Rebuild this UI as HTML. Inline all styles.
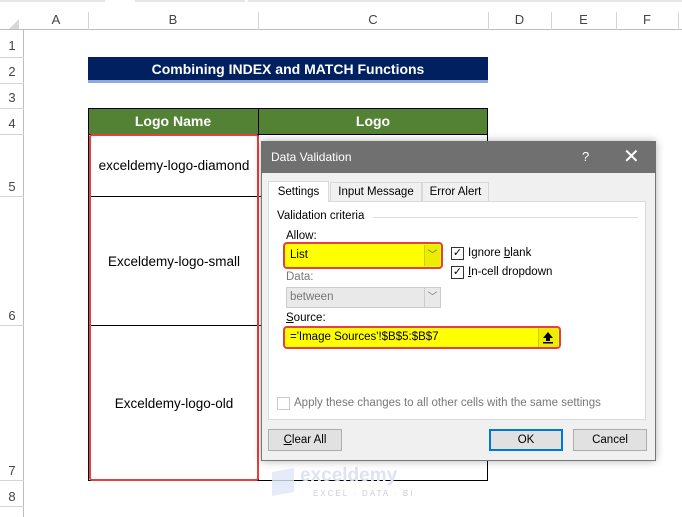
<!DOCTYPE html>
<html><head><style>
*{margin:0;padding:0;box-sizing:border-box}
body{width:682px;height:517px;background:#fff;position:relative;overflow:hidden;font-family:"Liberation Sans",sans-serif}
.a{position:absolute}
.hd{font-size:13px;color:#444;text-align:center}
.vl{position:absolute;width:1px;background:#d4d4d4}
.hl{position:absolute;height:1px;background:#d4d4d4}
.t{font-size:11.5px;color:#000}
</style></head><body>
<div class="a" style="left:0;top:0;width:682px;height:2px;background:#e6e6e6"></div>
<div class="a" style="left:105px;top:0;width:30px;height:2px;background:#fff"></div>
<div class="a" style="left:245px;top:0;width:3px;height:2px;background:#fff"></div>
<div class="a" style="left:0;top:12px;width:682px;height:18px;background:#fff;border-bottom:1px solid #bdbdbd"></div>
<div class="a" style="left:0;top:30px;width:24px;height:487px;border-right:1px solid #bdbdbd"></div>
<div class="a" style="left:9px;top:19px;width:0;height:0;border-left:10px solid transparent;border-bottom:10px solid #d8d8d8"></div>
<div class="a hd" style="left:24px;top:12px;width:64px">A</div>
<div class="a hd" style="left:88px;top:12px;width:170px">B</div>
<div class="a hd" style="left:258px;top:12px;width:230px">C</div>
<div class="a hd" style="left:488px;top:12px;width:63px">D</div>
<div class="a hd" style="left:551px;top:12px;width:65px">E</div>
<div class="a hd" style="left:616px;top:12px;width:62px">F</div>
<div class="vl" style="left:88px;top:12px;height:18px"></div>
<div class="vl" style="left:258px;top:12px;height:18px"></div>
<div class="vl" style="left:488px;top:12px;height:18px"></div>
<div class="vl" style="left:551px;top:12px;height:18px"></div>
<div class="vl" style="left:616px;top:12px;height:18px"></div>
<div class="vl" style="left:678px;top:12px;height:18px"></div>
<div class="a hd" style="left:0;top:38px;width:24px">1</div>
<div class="a hd" style="left:0;top:64px;width:24px">2</div>
<div class="a hd" style="left:0;top:90px;width:24px">3</div>
<div class="a hd" style="left:0;top:116px;width:24px">4</div>
<div class="a hd" style="left:0;top:179px;width:24px">5</div>
<div class="a hd" style="left:0;top:308px;width:24px">6</div>
<div class="a hd" style="left:0;top:463px;width:24px">7</div>
<div class="a hd" style="left:0;top:489px;width:24px">8</div>
<div class="hl" style="left:0;top:57px;width:24px"></div>
<div class="hl" style="left:0;top:83px;width:24px"></div>
<div class="hl" style="left:0;top:108px;width:24px"></div>
<div class="hl" style="left:0;top:134px;width:24px"></div>
<div class="hl" style="left:0;top:196px;width:24px"></div>
<div class="hl" style="left:0;top:325px;width:24px"></div>
<div class="hl" style="left:0;top:480px;width:24px"></div>
<div class="hl" style="left:0;top:506px;width:24px"></div>
<div class="a" style="left:88px;top:57px;width:400px;height:26px;background:#002060;border-bottom:3px solid #8ea9db;color:#fff;font-weight:bold;font-size:14px;text-align:center;line-height:24px">Combining INDEX and MATCH Functions</div>
<div class="a" style="left:88px;top:108px;width:400px;height:27px;background:#548235;border:1px solid #000"></div>
<div class="a" style="left:258px;top:108px;width:1px;height:27px;background:#000"></div>
<div class="a" style="left:88px;top:113px;width:170px;color:#fff;font-weight:bold;font-size:14px;text-align:center">Logo Name</div>
<div class="a" style="left:258px;top:113px;width:230px;color:#fff;font-weight:bold;font-size:14px;text-align:center">Logo</div>
<div class="a" style="left:88px;top:134px;width:400px;height:347px;border:1px solid #000;border-top:none"></div>
<div class="a" style="left:258px;top:134px;width:1px;height:347px;background:#000"></div>
<div class="a" style="left:88px;top:196px;width:400px;height:1px;background:#000"></div>
<div class="a" style="left:88px;top:325px;width:400px;height:1px;background:#000"></div>
<div class="a" style="left:89px;top:134px;width:170px;height:347px;border:2px solid #e84040;border-radius:3px"></div>
<div class="a" style="left:88px;top:158px;width:172px;text-align:center;font-size:13.5px">exceldemy-logo-diamond</div>
<div class="a" style="left:88px;top:254px;width:172px;text-align:center;font-size:13.5px">Exceldemy-logo-small</div>
<div class="a" style="left:88px;top:396px;width:172px;text-align:center;font-size:13.5px">Exceldemy-logo-old</div>
<div class="a" style="left:272px;top:470px;width:22px;height:24px;background:#dfe6f7;transform:skewY(-10deg);opacity:.8"></div>
<div class="a" style="left:300px;top:465px;font-size:19px;font-weight:bold;color:#dde3f3">exceldemy</div>
<div class="a" style="left:313px;top:489px;font-size:8px;color:#ccd;letter-spacing:2px">EXCEL · DATA · BI</div>
<div class="a" style="left:261px;top:141px;width:395px;height:320px;background:#f0f0f0;border:1px solid #777;box-shadow:0 0 8px rgba(0,0,0,.3)"></div>
<div class="a" style="left:261px;top:141px;width:395px;height:32px;background:#707070;color:#fff;font-size:12px;line-height:32px;padding-left:10px">Data Validation</div>
<div class="a" style="left:582px;top:149px;color:#fff;font-size:13px">?</div>
<div class="a" style="left:623px;top:144px;color:#fff;font-size:20px">✕</div>
<div class="a" style="left:268px;top:201px;width:378px;height:219px;background:#fff;border:1px solid #d9d9d9"></div>
<div class="a t" style="left:268px;top:181px;width:61px;height:21px;background:#fff;border:1px solid #d9d9d9;border-bottom:none;text-align:center;line-height:20px">Settings</div>
<div class="a t" style="left:330px;top:182px;width:92px;height:19px;border:1px solid #d9d9d9;border-bottom:none;text-align:center;line-height:19px">Input Message</div>
<div class="a t" style="left:422px;top:182px;width:67px;height:19px;border:1px solid #d9d9d9;border-bottom:none;text-align:center;line-height:19px">Error Alert</div>
<div class="a t" style="left:277px;top:210px">Validation criteria</div>
<div class="a" style="left:373px;top:217px;width:265px;height:1px;background:#ddd"></div>
<div class="a t" style="left:286px;top:230px">Allow:</div>
<div class="a" style="left:283px;top:242px;width:160px;height:27px;border:2px solid #e84040;border-radius:4px;background:#ffff00"></div>
<div class="a t" style="left:290px;top:249px">List</div>
<div class="a" style="left:424px;top:245px;width:16px;height:21px;border-left:1px solid #cc0;background:#eded00;color:#666;font-size:10px;text-align:center;line-height:21px">﹀</div>
<div class="a t" style="left:286px;top:271px;color:#777">Data:</div>
<div class="a" style="left:286px;top:287px;width:155px;height:21px;border:1px solid #ccc;background:#e9e9e9"></div>
<div class="a t" style="left:290px;top:291px;color:#777">between</div>
<div class="a" style="left:424px;top:288px;width:16px;height:19px;border-left:1px solid #ccc;color:#777;font-size:10px;text-align:center;line-height:19px">﹀</div>
<div class="a" style="left:451px;top:247px;width:13px;height:13px;border:1px solid #333;background:#fff;font-size:11px;line-height:11px;text-align:center">✓</div>
<div class="a t" style="left:468px;top:247px">Ignore <u>b</u>lank</div>
<div class="a" style="left:451px;top:266px;width:13px;height:13px;border:1px solid #333;background:#fff;font-size:11px;line-height:11px;text-align:center">✓</div>
<div class="a t" style="left:468px;top:266px"><u>I</u>n-cell dropdown</div>
<div class="a t" style="left:286px;top:312px"><u>S</u>ource:</div>
<div class="a" style="left:283px;top:326px;width:278px;height:23px;border:2px solid #e84040;border-radius:4px;background:#ffff00"></div>
<div class="a" style="left:290px;top:331px;font-size:11.5px">='Image Sources'!$B$5:$B$7</div>
<div class="a" style="left:538px;top:328px;width:20px;height:19px;border-left:1px solid #cc0;background:#eded00"></div>
<svg class="a" style="left:542px;top:331px" width="12" height="13" viewBox="0 0 12 13"><path d="M6 1 L11 7 H8 V10 H4 V7 H1 Z" fill="#000"/><rect x="1" y="11" width="10" height="1.5" fill="#000"/></svg>
<div class="a" style="left:277px;top:397px;width:13px;height:13px;border:1px solid #ccc;background:#fff"></div>
<div class="a t" style="left:294px;top:397px;color:#777">Apply these changes to all other cells with the same settings</div>
<div class="a t" style="left:268px;top:429px;width:74px;height:22px;background:#e1e1e1;border:1px solid #adadad;text-align:center;line-height:20px"><u>C</u>lear All</div>
<div class="a t" style="left:489px;top:429px;width:74px;height:22px;background:#e1e1e1;border:2px solid #0078d7;text-align:center;line-height:18px">OK</div>
<div class="a t" style="left:573px;top:429px;width:74px;height:22px;background:#e1e1e1;border:1px solid #adadad;text-align:center;line-height:20px">Cancel</div>
</body></html>
